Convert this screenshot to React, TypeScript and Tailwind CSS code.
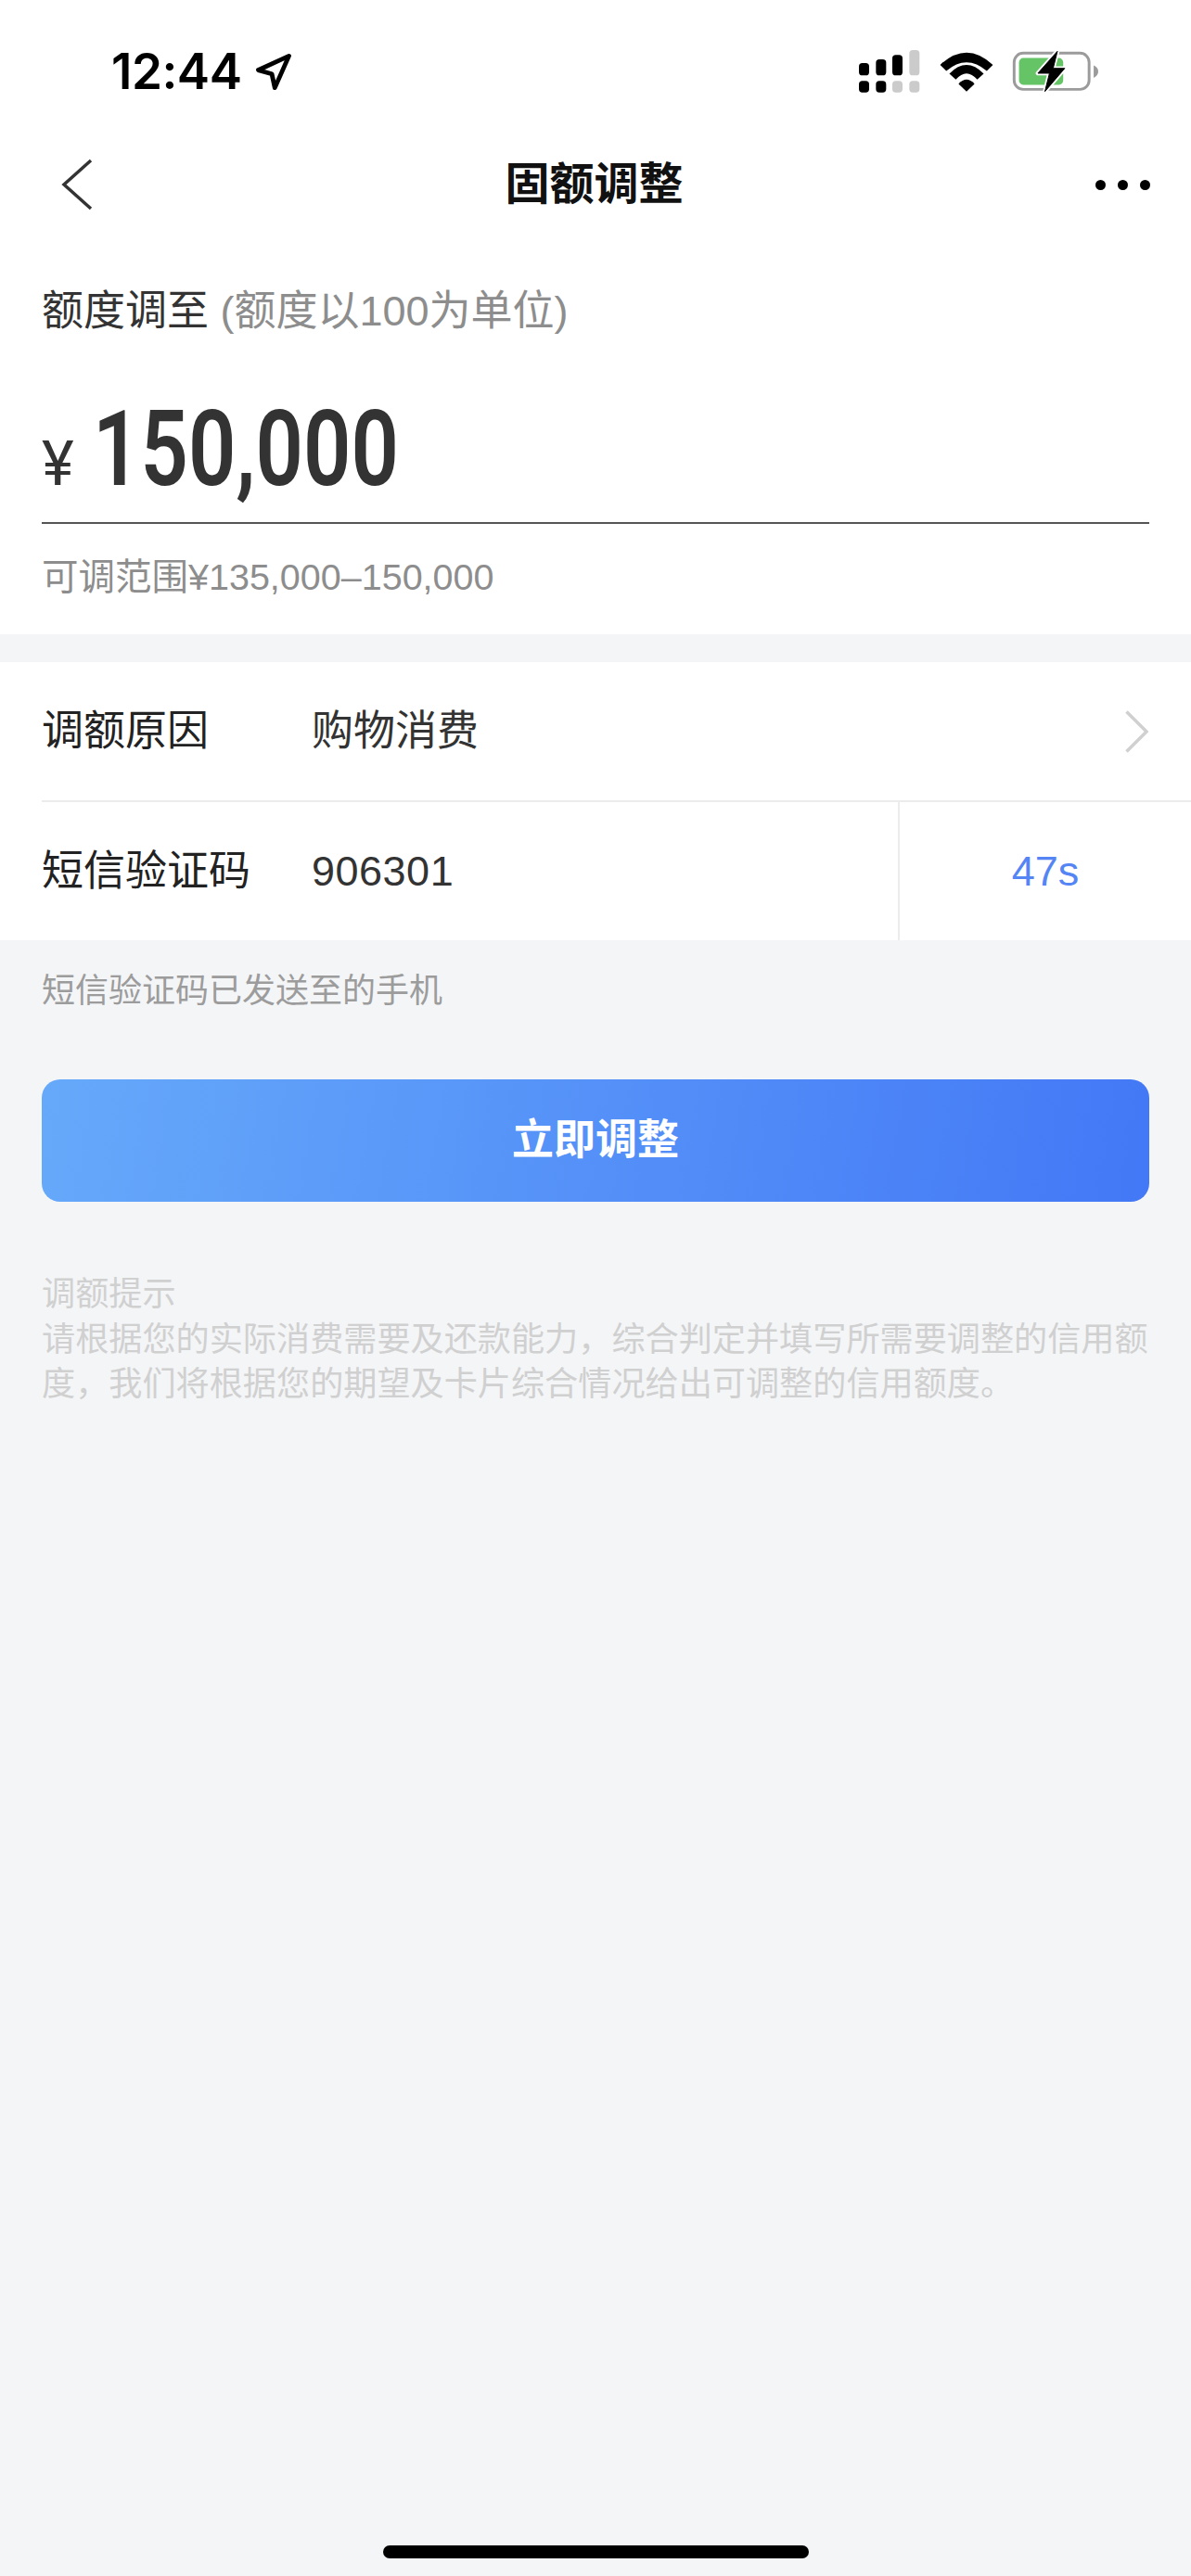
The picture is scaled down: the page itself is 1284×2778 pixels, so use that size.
const cjk = 'font-["Liberation_Sans","Noto_Sans_CJK_SC",sans-serif]'

function StatusBar() {
  return (
    <div className="h-[140px] flex items-start justify-between pl-[120px] pr-[99px] pt-[48px]">
      <div className="flex items-center gap-[14px] h-[58px]">
        <span className="font-['Inter',sans-serif] font-semibold text-[53px] leading-[58px] text-black tracking-[-0.5px]">12:44</span>
        <svg width="42" height="43" viewBox="556 76 130 130" fill="none" stroke="#000" strokeWidth="15" strokeLinejoin="round">
          <path d="M672 88 L570 135 L615 148 L625 194 Z" />
        </svg>
      </div>
      <div className="flex items-center gap-[22px] h-[58px]">
        <svg width="66" height="46" viewBox="135 68 198 138">
          <rect x="135" y="110" width="33" height="40" rx="11" />
          <rect x="190" y="98" width="33" height="52" rx="11" />
          <rect x="243" y="84" width="33" height="66" rx="11" />
          <rect x="298" y="68" width="33" height="82" rx="11" fill="#cbcbcb" />
          <rect x="135" y="168" width="33" height="37" rx="11" />
          <rect x="190" y="168" width="33" height="37" rx="11" />
          <rect x="243" y="168" width="33" height="37" rx="11" fill="#cbcbcb" />
          <rect x="298" y="168" width="33" height="37" rx="11" fill="#cbcbcb" />
        </svg>
        <svg width="58" height="43" viewBox="398 70 172 130" className="-ml-[1px]">
          <path d="M398 112 Q484 32 570 112 L550 132 Q484 76 418 132 Z" />
          <path d="M428 141 Q484 84 540 141 L519 160 Q484 120 449 160 Z" />
          <path d="M458 174 Q484 146 510 174 L484 199 Z" />
        </svg>
        <svg width="94" height="46" viewBox="640 66 280 140" className="-ml-[2px]">
          <rect x="644" y="76" width="246" height="119" rx="30" fill="none" stroke="#9b9b9b" strokeWidth="9" />
          <rect x="660" y="92" width="145" height="88" rx="14" fill="#65c466" />
          <path d="M905 116 Q920 122 920 136 Q920 150 905 157 Z" fill="#9b9b9b" />
          <path d="M786 70 L722 142 L760 142 L745 202 L810 126 L772 126 Z" stroke="#fff" strokeWidth="14" strokeLinejoin="round" />
          <path d="M786 70 L722 142 L760 142 L745 202 L810 126 L772 126 Z" stroke="#000" strokeWidth="3" strokeLinejoin="round" />
        </svg>
      </div>
    </div>
  )
}

function NavBar() {
  return (
    <div className="h-[115px] flex items-center justify-between pl-[66px] pr-[44px] pt-[3px]">
      <svg width="34" height="56" viewBox="0 0 34 56" fill="none" stroke="#333" strokeWidth="3.5">
        <path d="M32 2 L3 28 L32 54" />
      </svg>
      <h1 className="text-[48px] leading-[60px] font-bold text-[#111]">固额调整</h1>
      <div className="flex items-center gap-[13px]">
        <span className="w-[11px] h-[11px] rounded-full bg-black" />
        <span className="w-[11px] h-[11px] rounded-full bg-black" />
        <span className="w-[11px] h-[11px] rounded-full bg-black" />
      </div>
    </div>
  )
}

export default function App() {
  return (
    <div className={`w-[1284px] h-[2778px] flex flex-col bg-[#f4f5f7] ${cjk}`}>
      <div className="bg-white">
        <StatusBar />
        <NavBar />
        {/* 额度输入 */}
        <div className="px-[45px] pt-[51px] h-[429px]">
          <p className="text-[45px] leading-[60px] text-[#333]">
            额度调至 <span className="text-[#8d8d8d]">(额度以100为单位)</span>
          </p>
          <div className="h-[199px] flex items-end border-b-2 border-[#555] pb-[19px]">
            <span className="font-['Roboto',sans-serif] text-[66px] leading-[80px] text-[#333] mb-[3px]">¥</span>
            <span className="ml-[20px] origin-left scale-x-[0.79] font-['Roboto',sans-serif] font-semibold text-[114px] leading-[120px] text-[#333]">150,000</span>
          </div>
          <p className="mt-[32px] text-[39.5px] leading-[50px] text-[#8d8d8d]">可调范围¥135,000–150,000</p>
        </div>
      </div>

      {/* 调额表单 */}
      <div className="mt-[30px] bg-white">
        <div className="h-[149px] flex items-center pl-[45px] pr-[46px]">
          <span className="w-[291px] text-[45px] text-[#222]">调额原因</span>
          <span className="flex-1 text-[45px] text-[#333]">购物消费</span>
          <svg width="25" height="46" viewBox="0 0 25 46" fill="none" stroke="#d0d0d0" strokeWidth="3.5">
            <path d="M1.5 1.5 L23 23 L1.5 44.5" />
          </svg>
        </div>
        <div className="ml-[45px] h-[2px] bg-[#ececec]" />
        <div className="h-[149px] flex items-center pl-[45px]">
          <span className="w-[291px] text-[45px] text-[#222]">短信验证码</span>
          <span className="w-[632px] text-[45px] tracking-[0.5px] text-[#333]">906301</span>
          <div className="flex-1 h-full flex items-center justify-center border-l-2 border-[#ececec] text-[45px] text-[#5585f5]">47s</div>
        </div>
      </div>

      <p className="mt-[30px] px-[45px] text-[36px] leading-[50px] text-[#9c9c9c]">短信验证码已发送至的手机</p>

      <button className="mt-[70px] mx-[45px] h-[132px] rounded-[20px] bg-[linear-gradient(100deg,#66a9fa,#4378f6)] text-white text-[45px] font-bold">
        立即调整
      </button>

      <div className="mt-[76px] px-[45px] text-[36.15px] leading-[48.5px] text-[#d0d0d0]">
        <p>调额提示</p>
        <p>请根据您的实际消费需要及还款能力，综合判定并填写所需要调整的信用额度，我们将根据您的期望及卡片综合情况给出可调整的信用额度。</p>
      </div>

      {/* home indicator */}
      <div className="mt-auto pb-[19px] flex justify-center">
        <div className="w-[459px] h-[14px] rounded-full bg-black" />
      </div>
    </div>
  )
}
